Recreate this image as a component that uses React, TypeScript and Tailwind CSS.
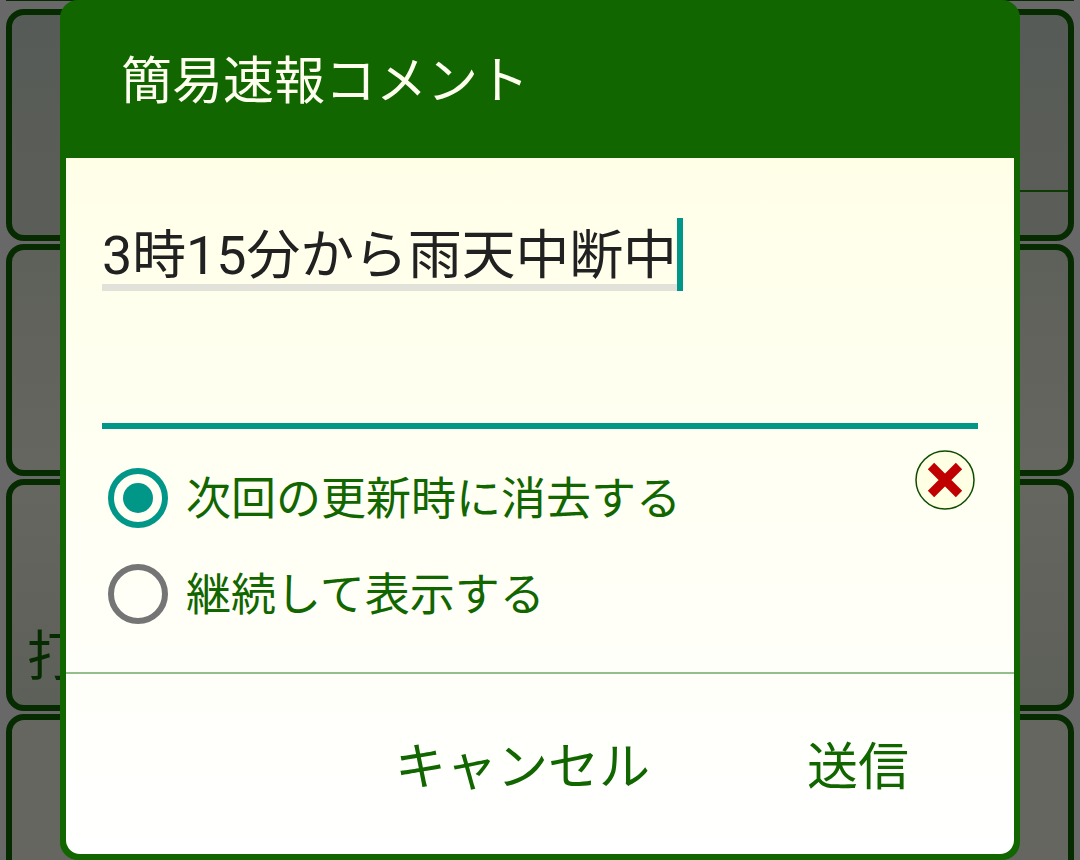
const cjk = "font-['Roboto','Noto_Sans_CJK_JP',sans-serif]";

function BackCard({ className = '', children }: { className?: string; children?: React.ReactNode }) {
  return (
    <div
      className={`relative h-[232px] shrink-0 rounded-[18px] border-[6px] border-[#062b00] bg-[#666660] ${className}`}
    >
      {children}
    </div>
  );
}

function Radio({ checked, label }: { checked?: boolean; label: string }) {
  return (
    <div className="flex h-[96px] items-center">
      <div
        className={`ml-[6px] flex h-[60px] w-[60px] items-center justify-center rounded-full border-[6px] ${
          checked ? 'border-[#009688]' : 'border-[#757575]'
        }`}
      >
        {checked && <div className="h-[30px] w-[30px] rounded-full bg-[#009688]" />}
      </div>
      <span className="ml-[18px] mt-[4px] text-[45px] leading-[60px] text-[#116600]">{label}</span>
    </div>
  );
}

export default function App() {
  return (
    <div className={`relative h-[860px] w-[1080px] overflow-hidden bg-[#686868] ${cjk}`}>
      {/* list behind the dialog */}
      <div className="flex h-[860px] flex-col px-[6px]">
        <div className="h-px shrink-0 bg-[#062b00]" />
        <div className="mt-[8px] flex flex-col gap-[3px]">
          <BackCard className="bg-gradient-to-b from-[#575b57] to-[#5b5e58]">
            <div className="ml-auto mt-[175px] h-[2px] w-[100px] bg-[#0e3a06]" />
          </BackCard>
          <BackCard className="bg-gradient-to-b from-[#5e605a] to-[#666660]" />
          <BackCard className="flex items-end bg-gradient-to-b from-[#666660] to-[#5d5f59]">
            <span className="mb-[17px] ml-[15px] text-[54px] leading-[60px] text-[#062b00]">打</span>
          </BackCard>
          <BackCard />
        </div>
      </div>

      {/* dialog */}
      <div className="absolute left-[60px] top-0 flex h-[860px] w-[960px] flex-col rounded-[18px] bg-[#116600] px-[6px] pb-[6px]">
        <div className="flex h-[158px] shrink-0 items-center pl-[55px]">
          <span className="mt-[5px] text-[51px] leading-[60px] text-[#fffff0]">簡易速報コメント</span>
        </div>
        <div className="flex flex-1 flex-col overflow-hidden rounded-b-[14px] bg-gradient-to-b from-[#ffffe8] via-[#fffff4] to-white">
          <div className="relative mx-[36px] h-[271px] border-b-[6px] border-[#009688]">
            <div className="mt-[60px] flex h-[73px] items-start">
              <span className="mt-[1px] h-[72px] border-b-[7px] border-[#e2e2da] pt-[9px] text-[53.8px] leading-[56px] text-[#212121]">
                3時15分から雨天中断中
              </span>
              <div className="h-[73px] w-[6px] bg-[#009688]" />
            </div>
          </div>
          <div className="relative mx-[36px] flex h-[243px] flex-col pt-[21px]">
            <Radio checked label="次回の更新時に消去する" />
            <Radio label="継続して表示する" />
            <svg
              className="absolute right-[3px] top-[21px] h-[60px] w-[60px]"
              viewBox="0 0 60 60"
            >
              <circle cx="30" cy="30" r="29" fill="#ffffe3" stroke="#0d4d00" strokeWidth="1.5" />
              <path d="M16 16 L44 44 M44 16 L16 44" stroke="#c00000" strokeWidth="9" />
            </svg>
          </div>
          <div className="h-[2px] shrink-0 bg-[#93c08a]" />
          <div className="flex flex-1 items-center justify-end pt-[8px]">
            <span className="text-[51px] leading-[60px] text-[#116600]">キャンセル</span>
            <span className="ml-[157px] mr-[105px] text-[51px] leading-[60px] text-[#116600]">送信</span>
          </div>
        </div>
      </div>
    </div>
  );
}
